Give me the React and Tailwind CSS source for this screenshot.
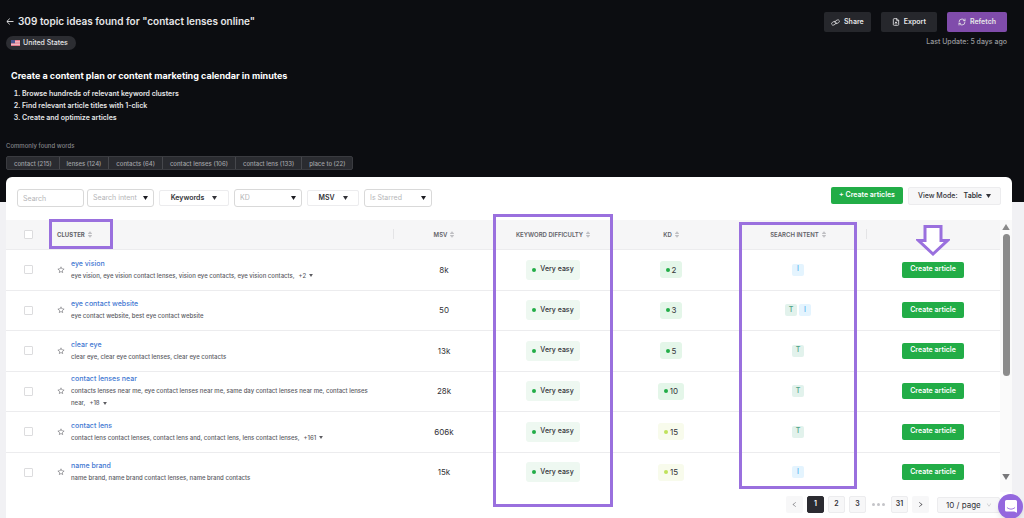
import { useState } from 'react'
import { AiOutlineStar, AiOutlineLeft, AiOutlineRight, AiOutlineDown } from 'react-icons/ai'
import { FileUp, RefreshCw } from 'lucide-react'

const WORDS = ['contact (215)', 'lenses (124)', 'contacts (64)', 'contact lenses (106)', 'contact lens (133)', 'place to (22)']

const STEPS = [
  'Browse hundreds of relevant keyword clusters',
  'Find relevant article titles with 1-click',
  'Create and optimize articles',
]

const CLUSTERS = [
  { name: 'eye vision', keywords: 'eye vision, eye vision contact lenses, vision eye contacts, eye vision contacts,', more: 2, msv: '8k', kd: 2, intent: ['I'] },
  { name: 'eye contact website', keywords: 'eye contact website, best eye contact website', msv: '50', kd: 3, intent: ['T', 'I'] },
  { name: 'clear eye', keywords: 'clear eye, clear eye contact lenses, clear eye contacts', msv: '13k', kd: 5, intent: ['T'] },
  { name: 'contact lenses near', keywords: 'contacts lenses near me, eye contact lenses near me, same day contact lenses near me, contact lenses near,', more: 18, msv: '28k', kd: 10, intent: ['T'] },
  { name: 'contact lens', keywords: 'contact lens contact lenses, contact lens and, contact lens, lens contact lenses,', more: 161, msv: '606k', kd: 15, intent: ['T'] },
  { name: 'name brand', keywords: 'name brand, name brand contact lenses, name brand contacts', msv: '15k', kd: 15, intent: ['I'] },
]

function Caret({ size = 'h-1 w-[5px]', className = '' }) {
  return (
    <svg viewBox="0 0 10 8" className={`shrink-0 fill-current ${size} ${className}`} aria-hidden="true">
      <path d="M0 0h10L5 8z" />
    </svg>
  )
}

function Sorter() {
  return (
    <svg viewBox="0 0 8 14" className="h-[7px] w-1 shrink-0 fill-none stroke-[#a6a6aa]" aria-hidden="true">
      <path d="M1 5l3-3.500L7 5zM1 9l3 3.500L7 9z" strokeWidth="1.4" />
    </svg>
  )
}

function LinkIcon() {
  return (
    <svg viewBox="0 0 18 14" className="h-[7px] w-[9px] fill-none stroke-current" strokeWidth="1.4" aria-hidden="true">
      <rect x="1" y="5.5" width="9.5" height="6" rx="3" transform="rotate(-28 5.75 8.5)" />
      <rect x="7.5" y="2.5" width="9.5" height="6" rx="3" transform="rotate(-28 12.25 5.5)" />
    </svg>
  )
}

function Flag() {
  return (
    <svg viewBox="0 0 18 12" className="h-[6px] w-[9px]" aria-hidden="true">
      <rect width="18" height="12" fill="#f0d3da" />
      <path d="M0 1h18M0 4.3h18M0 7.6h18M0 11h18" stroke="#e0697c" strokeWidth="1.7" />
      <rect width="8" height="6.5" fill="#4a5590" />
    </svg>
  )
}

function FilterSelect({ label, width }) {
  return (
    <div className={`relative ${width}`}>
      <select
        aria-label={label}
        className="block h-[18px] w-full appearance-none rounded-[3px] border border-[#d9d9d9] bg-white pl-[5px] text-[7px] text-[#b5b5b8]"
      >
        <option>{label}</option>
      </select>
      <Caret className="pointer-events-none absolute top-[7px] right-1.5 text-[#1c1c22]" />
    </div>
  )
}

function FilterButton({ label, width }) {
  return (
    <button
      type="button"
      className={`flex h-4 items-center justify-center gap-2 rounded-[2px] border border-[#ececee] font-semibold text-[#333338] ${width}`}
    >
      {label}
      <Caret />
    </button>
  )
}

function HeadCell({ label, children }) {
  return (
    <th scope="col" className="relative p-0 font-semibold">
      <button type="button" className="inline-flex items-center gap-[3px] align-middle uppercase">
        {label}
        <Sorter />
      </button>
      {children}
    </th>
  )
}

function Highlight({ className }) {
  return <span className={`pointer-events-none absolute z-10 border-[3px] border-[#9a70de] ${className}`} />
}

function ClusterRow({ cluster, checked, onToggle }) {
  const easy = cluster.kd < 15

  return (
    <tr className="border-b border-[#ececee] last:border-0 odd:h-[41px] even:h-10">
      <td className="p-0 text-center">
        <input
          type="checkbox"
          aria-label={`Select ${cluster.name}`}
          checked={checked}
          onChange={onToggle}
          className="mx-auto block size-[9px] appearance-none rounded-[1px] border border-[#dcdcde] bg-white checked:bg-[#9a70de]"
        />
      </td>
      <td className="p-0 pl-[7px]">
        <div className="flex items-center gap-1.5">
          <button type="button" aria-label={`Star ${cluster.name}`} className="shrink-0 text-[#77777c]">
            <AiOutlineStar className="size-2" />
          </button>
          <div className="pr-3">
            <a href="#cluster" className="block w-fit leading-3 font-medium text-[#3f78d2]">{cluster.name}</a>
            <p className="text-[6px] leading-3 font-medium text-[#5a5a5f]">
              {cluster.keywords}
              {cluster.more && (
                <button type="button" className="ml-1 inline-flex items-center gap-[3px] leading-2">
                  {`+${cluster.more}`}
                  <Caret size="h-[3px] w-1" />
                </button>
              )}
            </p>
          </div>
        </div>
      </td>
      <td className="p-0 text-center text-[8px]">{cluster.msv}</td>
      <td className="p-0 text-center">
        <span className="inline-flex h-5 items-center gap-1 rounded-[3px] bg-[#eef8f1] px-1.5 align-middle font-medium">
          <i className="size-1 rounded-full bg-[#22ad47]" />
          Very easy
        </span>
      </td>
      <td className="p-0 text-center">
        <span className={`inline-flex h-[17px] items-center gap-0.5 rounded-[3px] px-1.5 align-middle text-[8px] ${easy ? 'bg-[#e4f6e9]' : 'bg-[#f8fbec]'}`}>
          <i className={`size-1 rounded-full ${easy ? 'bg-[#22ad47]' : 'bg-[#bfe25a]'}`} />
          {cluster.kd}
        </span>
      </td>
      <td className="p-0">
        <div className="flex justify-center gap-0.5">
          {cluster.intent.map(type => (
            <span
              key={type}
              className={`flex size-3 items-center justify-center rounded-[2px] font-medium ${
                type === 'T' ? 'bg-[#e2f2ec] text-[#4fa186]' : 'bg-[#e4f4fe] text-[#54b0ee]'
              }`}
            >
              {type}
            </span>
          ))}
        </div>
      </td>
      <td className="p-0 text-center">
        <button type="button" className="h-4 rounded-[2px] bg-[#22ad47] px-2 align-middle font-semibold text-white">
          Create article
        </button>
      </td>
    </tr>
  )
}

function Pagination() {
  const [page, setPage] = useState(1)
  const pageClass = n =>
    `flex size-[17px] items-center justify-center rounded-[2px] border ${
      page === n ? 'border-[#2b2b31] bg-[#2b2b31] text-white' : 'border-[#ececee] bg-[#f7f7f8] text-[#333338]'
    }`

  return (
    <nav aria-label="Pagination" className="mt-1 flex items-center justify-end gap-1 pr-3 pb-1.5 font-semibold">
      <button type="button" aria-label="Previous page" className="flex size-[17px] items-center justify-center rounded-[2px] bg-[#f7f7f8] text-[#77777c]">
        <AiOutlineLeft className="size-[7px]" />
      </button>
      {[1, 2, 3].map(n => (
        <button key={n} type="button" onClick={() => setPage(n)} className={pageClass(n)}>{n}</button>
      ))}
      <span className="flex w-[17px] justify-center gap-0.5">
        <i className="size-[3px] rounded-full bg-[#c4c4c8]" />
        <i className="size-[3px] rounded-full bg-[#c4c4c8]" />
        <i className="size-[3px] rounded-full bg-[#c4c4c8]" />
      </span>
      <button type="button" onClick={() => setPage(31)} className={pageClass(31)}>31</button>
      <button type="button" aria-label="Next page" className="flex size-[17px] items-center justify-center rounded-[2px] bg-[#f7f7f8] text-[#333338]">
        <AiOutlineRight className="size-[7px]" />
      </button>
      <div className="relative ml-1 w-[63px]">
        <select aria-label="Rows per page" className="block h-4 w-full appearance-none rounded-[2px] border border-[#ececee] bg-[#f7f7f8] pl-2 text-[8px] font-normal text-[#333338]">
          <option>10 / page</option>
        </select>
        <AiOutlineDown className="pointer-events-none absolute top-[5px] right-2 size-1.5 text-[#bdbdc1]" />
      </div>
    </nav>
  )
}

export default function App() {
  const [selected, setSelected] = useState([])

  const toggle = name =>
    setSelected(prev => (prev.includes(name) ? prev.filter(n => n !== name) : [...prev, name]))

  return (
    <div className="flex min-h-screen flex-col bg-[#f1f1f4] font-['Inter',sans-serif] text-[7px] text-[#333338]">
      <header className="bg-[#0c0d11] pt-3 pr-[17px] pb-8 pl-1.5 text-[#e6e6e8]">
        <div className="flex items-start justify-between">
          <div>
            <div className="flex h-[18px] items-center gap-1">
              <a href="#back" aria-label="Back">
                <svg viewBox="0 0 16 14" className="h-[7px] w-2 fill-none stroke-current" strokeWidth="1.8" aria-hidden="true">
                  <path d="M15 7H2M7.500 1.200L1.600 7l5.900 5.800" />
                </svg>
              </a>
              <h1 className="text-[10px] font-semibold">309 topic ideas found for "contact lenses online"</h1>
            </div>
            <span className="mt-1.5 inline-flex h-3.5 items-center gap-[3px] rounded-full bg-[#2c2d32] pr-2 pl-[5px] align-top font-medium">
              <Flag />
              United States
            </span>
          </div>
          <div className="flex flex-col items-end">
            <div className="flex gap-2.5 font-semibold">
              <button type="button" className="flex h-5 items-center gap-1 rounded-[2px] bg-[#26272c] px-[7px]">
                <LinkIcon />
                Share
              </button>
              <button type="button" className="flex h-5 items-center gap-1 rounded-[2px] bg-[#26272c] px-[11px]">
                <FileUp className="size-2" strokeWidth={2.5} />
                Export
              </button>
              <button type="button" className="flex h-5 items-center gap-1 rounded-[2px] bg-[#804cab] px-[11px]">
                <RefreshCw className="size-2" strokeWidth={2.5} />
                Refetch
              </button>
            </div>
            <p className="mt-1 leading-3 font-medium text-[#98999d]">Last Update: 5 days ago</p>
          </div>
        </div>

        <h2 className="mt-[18px] pl-[5px] text-[9px] leading-4 font-bold text-white">
          Create a content plan or content marketing calendar in minutes
        </h2>
        <ol className="mt-1 list-decimal pl-4 leading-3 font-semibold">
          {STEPS.map(step => <li key={step}>{step}</li>)}
        </ol>

        <p className="mt-4 text-[6px] leading-3 font-medium text-[#85868a]">Commonly found words</p>
        <div className="mt-1 flex w-fit divide-x divide-[#46474c] rounded-[2px] border border-[#3a3b40] bg-[#2a2b30] text-[6px] font-medium text-[#a2a3a7]">
          {WORDS.map(word => (
            <button key={word} type="button" className="h-3 px-[7px]">{word}</button>
          ))}
        </div>
      </header>

      <main className="relative mr-3 -mt-[25px] ml-1.5 flex-1 rounded-t-md bg-white">
        <div className="flex items-start justify-between px-[11px] pt-2.5 pb-[13px]">
          <div className="flex items-center gap-[5px] pt-0.5">
            <div className="flex gap-[3px]">
              <input
                type="text"
                aria-label="Search"
                placeholder="Search"
                className="h-[18px] w-[67px] rounded-[3px] border border-[#d9d9d9] px-[5px] placeholder:text-[#b5b5b8]"
              />
              <FilterSelect label="Search intent" width="w-[67px]" />
            </div>
            <FilterButton label="Keywords" width="w-[70px]" />
            <FilterSelect label="KD" width="w-[68px]" />
            <FilterButton label="MSV" width="w-[52px]" />
            <FilterSelect label="Is Starred" width="w-[68px]" />
          </div>
          <div className="flex items-start gap-[5px]">
            <button type="button" className="h-[17px] rounded-[2px] bg-[#22ad47] px-2 font-semibold text-white">+ Create articles</button>
            <button type="button" className="flex h-[18px] items-center gap-1.5 rounded-[2px] border border-[#ececee] bg-[#f7f7f8] px-[9px] font-medium">
              View Mode:
              <span className="flex items-center gap-1 font-semibold">Table <Caret /></span>
            </button>
          </div>
        </div>

        <div className="flex">
          <table className="min-w-0 flex-1 table-fixed border-collapse">
            <colgroup>
              <col className="w-11" />
              <col />
              <col className="w-[100px]" />
              <col className="w-[118px]" />
              <col className="w-[118px]" />
              <col className="w-[136px]" />
              <col className="w-[134px]" />
            </colgroup>
            <thead>
              <tr className="h-[29px] border-b border-[#ececee] bg-[#f6f6f7] text-[6px] text-[#626267]">
                <th scope="col" className="p-0">
                  <input
                    type="checkbox"
                    aria-label="Select all clusters"
                    checked={selected.length === CLUSTERS.length}
                    onChange={e => setSelected(e.target.checked ? CLUSTERS.map(c => c.name) : [])}
                    className="mx-auto block size-[9px] appearance-none rounded-[1px] border border-[#dcdcde] bg-white checked:bg-[#9a70de]"
                  />
                </th>
                <th scope="col" className="relative p-0 pl-[7px] text-left font-bold">
                  <div className="flex h-2.5 items-center border-r border-[#e4e4e6]">
                    <button type="button" className="flex items-center gap-[3px] uppercase">
                      Cluster
                      <Sorter />
                    </button>
                  </div>
                  <Highlight className="-top-px -left-px h-[30px] w-16" />
                </th>
                <HeadCell label="MSV" />
                <HeadCell label="Keyword difficulty">
                  <Highlight className="-inset-x-px -top-1.5 h-[293px]" />
                </HeadCell>
                <HeadCell label="KD" />
                <HeadCell label="Search intent">
                  <Highlight className="inset-x-[9px] top-0.5 h-[267px]" />
                </HeadCell>
                <th scope="col" aria-label="Actions" className="relative p-0">
                  <div className="h-2.5 border-l border-[#e4e4e6]" />
                  <svg viewBox="0 0 34 32" className="absolute top-1 left-[50px] z-10 h-8 w-[34px] fill-white stroke-[#9a70de]" strokeWidth="3" aria-hidden="true">
                    <path d="M9 2.500h16v14h6.500L17 30 2.500 16.500H9z" />
                  </svg>
                </th>
              </tr>
            </thead>
            <tbody>
              {CLUSTERS.map(cluster => (
                <ClusterRow
                  key={cluster.name}
                  cluster={cluster}
                  checked={selected.includes(cluster.name)}
                  onToggle={() => toggle(cluster.name)}
                />
              ))}
            </tbody>
          </table>
          <div className="flex w-3 flex-col items-center bg-[#fafafa] pt-1 pb-3" aria-hidden="true">
            <Caret size="h-1.5 w-2" className="rotate-180 text-[#8b8b8b]" />
            <div className="mt-1 h-[142px] w-[7px] rounded-full bg-[#8b8b8b]" />
            <Caret size="h-1.5 w-2" className="mt-auto text-[#77777a]" />
          </div>
        </div>

        <Pagination />
      </main>

      <button
        type="button"
        aria-label="Open chat"
        className="fixed right-px -bottom-px z-20 flex size-[25px] items-center justify-center rounded-full bg-[#9468de] shadow-md"
      >
        <svg viewBox="0 0 24 26" className="h-[13px] w-3" aria-hidden="true">
          <path d="M3 0h18a3 3 0 013 3v22.500L18.500 23H3a3 3 0 01-3-3V3a3 3 0 013-3z" fill="#fff" />
          <path d="M4.500 15.500c4.500 3.800 10.500 3.800 15 0" fill="none" stroke="#9468de" strokeWidth="1.800" strokeLinecap="round" />
        </svg>
      </button>
    </div>
  )
}
